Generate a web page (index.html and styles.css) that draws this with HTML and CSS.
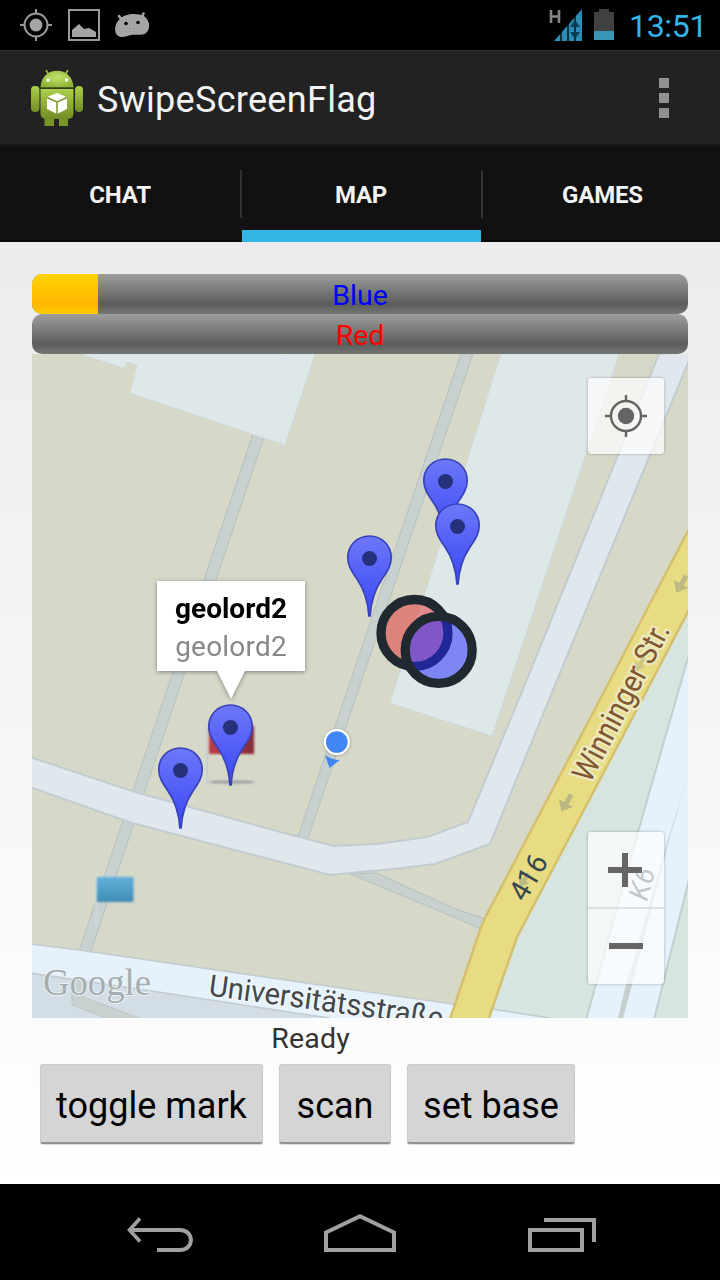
FILE: index.html
```html
<!DOCTYPE html>
<html lang="en">
<head>
<meta charset="utf-8">
<title>SwipeScreenFlag</title>
<link rel="stylesheet" href="styles.css">
</head>
<body>
<header class="status">
  <div class="status-left">
    <svg width="32" height="32" viewBox="0 0 32 32" fill="none" stroke="#999" stroke-width="2"><circle cx="16" cy="16" r="11.5"/><circle cx="16" cy="16" r="6.4" fill="#a5a5a5" stroke="none"/><path d="M16 0v5M16 27v5M0 16h5M27 16h5"/></svg>
    <svg width="32" height="32" viewBox="0 0 32 32"><path d="M1 1h30v30H1z" fill="none" stroke="#999" stroke-width="2"/><path d="M4 28v-7l7-6 5 5 5-1 7 4v5z" fill="#a5a5a5"/></svg>
    <svg class="head" width="35" height="27" viewBox="0 0 35 27"><path d="M4 5l3 4M28.500 2.500l-2 4" stroke="#a5a5a5" stroke-width="2.600" stroke-linecap="round"/><path d="M5 8C10 2 23 2 29 5c6 4 7 13 2 17-4 3-10 1-15 2-4 1-10 4-14 0C-2 19 1 11 5 8z" fill="#a5a5a5"/><circle cx="11" cy="12.500" r="1.800"/><circle cx="23" cy="11.500" r="1.800"/><path d="M15 17v1M15 20v1M19 17v1M19 20v1" stroke="#888" stroke-width="1"/></svg>
  </div>
  <div class="status-right">
    <svg width="34" height="34" viewBox="0 0 34 34"><path d="M2 1v13M10 1v13M2 7.500h8" stroke="#858585" stroke-width="2.600" fill="none"/><path d="M5 32L33 0v32z" fill="#2b8db6"/><path d="M12 18v15M19 12v21M26 6v27" stroke="#000" stroke-width="1.300"/><path d="M26 11l5 7H21zM26 30l5-7H21z" fill="#0b3e55"/></svg>
    <svg class="battery" width="20" height="31" viewBox="0 0 20 31"><path d="M0 3h5V0h10v3h5v28H0z" fill="#414141"/><path d="M0 22h20v9H0z" fill="#3996b9"/></svg>
    <span class="clock">13:51</span>
  </div>
</header>
<div class="actionbar">
  <svg width="54" height="57" viewBox="0 0 54 57">
    <defs><linearGradient id="droid" x1="0" y1="0" x2="0" y2="1"><stop offset="0" stop-color="#acd14b"/><stop offset="1" stop-color="#718c25"/></linearGradient><radialGradient id="dome" cx=".5" cy=".4" r=".6"><stop offset="0" stop-color="#c2e46d"/><stop offset="1" stop-color="#8fb434"/></radialGradient></defs>
    <path d="M16 0l3 5M38 0l-3 5" stroke="#a4c639" stroke-width="1.600"/>
    <path d="M14.500 44H24v12h-9.500zM29 44h9v12h-9z" fill="#78952a"/>
    <rect x="1" y="16" width="8.500" height="26" rx="4" fill="url(#droid)"/><rect x="45" y="16" width="8" height="26" rx="4" fill="url(#droid)"/>
    <path d="M10.500 19h33v24q0 6-6 6h-21q-6 0-6-6z" fill="url(#droid)"/>
    <path d="M10.500 17.500C11-5 43-5 43.500 17.500z" fill="url(#dome)"/>
    <path d="M10.500 18h33" stroke="#435218"/><circle cx="18" cy="10" r="1.700" fill="#fff"/><circle cx="36.500" cy="10" r="1.700" fill="#fff"/>
    <path d="M17 27l10-4 10 4v12l-10 5-10-5z" fill="#fff"/><path d="M17 27.500l10 4.500 10-4.500M27 32v12" stroke="#78952a" stroke-width="1.500" fill="none"/>
  </svg>
  <h1 class="title">SwipeScreenFlag</h1>
  <div class="overflow"><i></i><i></i><i></i></div>
</div>
<nav class="tabs">
  <div class="tab">CHAT</div>
  <div class="tab active">MAP</div>
  <div class="tab last">GAMES</div>
</nav>
<main class="content">
  <div class="bar blue"><div class="fill"></div><span>Blue</span></div>
  <div class="bar red"><span>Red</span></div>
  <div class="map">
    <svg class="canvas" width="656" height="664" viewBox="32 354 656 664">
      <defs>
        <linearGradient id="pinfill" x1="0" y1="0" x2="0" y2="1"><stop offset="0" stop-color="#6d78fa"/><stop offset=".8" stop-color="#4550f4"/><stop offset="1" stop-color="#3b47ed"/></linearGradient>
        <linearGradient id="redflag"><stop offset="0" stop-color="#bd3c45"/><stop offset="1" stop-color="#852c36"/></linearGradient>
        <linearGradient id="blueflag" x1="0" y1="0" x2="0" y2="1"><stop offset="0" stop-color="#63b0dc"/><stop offset="1" stop-color="#3f8db3"/></linearGradient>
        <filter id="soft" x="-20%" y="-20%" width="140%" height="140%"><feGaussianBlur stdDeviation=".8"/></filter>
        <filter id="pole" x="-200%" y="-10%" width="500%" height="120%"><feGaussianBlur stdDeviation=".6"/></filter>
        <filter id="shade" x="-30%" y="-150%" width="160%" height="400%"><feGaussianBlur stdDeviation="1.200"/></filter>
        <g id="pin"><path d="M0-81C12.500-81 21.700-71.500 21.700-59.500C21.700-51 17.500-45.500 12.500-38C5-27 1.500-17 .6-1h-1.200C-1.500-17-5-27-12.500-38C-17.500-45.500-21.700-51-21.700-59.500C-21.700-71.500-12.500-81 0-81z" fill="url(#pinfill)" stroke="#3843b9" stroke-width="1.700"/><circle cy="-58.500" r="7.500" fill="#25317a"/></g>
        <path id="arrow" d="M-2-10h5V0h5L0 10-8 0h6z" fill="#bdb982"/>
        <path id="uni" d="M208 995.500L360 1016L450 1030"/>
      </defs>
      <path d="M32 354h656v664H32z" fill="#d6d8c8"/>
      <g fill="#c8d1cf" stroke="#b5c0bf">
        <path d="M280 354h12L90 954H78z"/>
        <path d="M461 354h12L307 841l-10-2z"/>
        <path d="M350 874l10 4 96 40 25 11 5-10-28-9-82-37z"/>
      </g>
      <g fill="#dfe8e9" stroke="#c7d9e1" stroke-dasharray="3 2">
        <path d="M80 354l44 14 3-6 10 3-7 28 155 52 30-91z"/>
        <path d="M501 354h118L492 736l-102-33z"/>
      </g>
      <path d="M279 354h13L263 438l-9-3z" fill="#dce6e8" opacity=".8"/>
      <path d="M659 354L526.700 680 468 822l-41 15-50 7-43 2-50-13L135 792 30 757v30l102 36 198 52 30-3 33-3 42-5 55-20L553 690 690 358v-7z" fill="#e0e8ee" stroke="#c3cccf" stroke-width="2"/>
      <path d="M688 600v418H486L517 937z" fill="#d6e5df"/>
      <path d="M30 944l49 6 283 41 91 13 39 5 64 10H330l-35-5-130-20-135-20z" fill="#e5f2fb"/>
      <path d="M32 973l133 20 130 20 35 5H32z" fill="#d3dde6"/>
      <path d="M30 944l49 6 283 41 91 13 39 5 64 10M30 973l135 20 130 20 35 5" fill="none" stroke="#c3cccf" stroke-width="1.700"/>
      <path d="M72 979v26l37 14h33l-59-22v-16z" fill="#c8d1cf" stroke="#b9c6c3"/>
      <path d="M690 651L638 832 586 1020h68L690 875z" fill="#e5f2fb" stroke="#c3cfce" stroke-width="2"/>
      <path d="M688 775l-20 65-42 145-8 33h5l9-33 37-145z" fill="#c6cfd0"/>
      <path d="M690 527L605 690 485 918l-5 12-31 92h39l4-13 25-72L647 690 690 608z" fill="#e8dc82" stroke="#d5bf6d" stroke-width="2.500"/>
      <use href="#arrow" transform="translate(681 584) rotate(28)"/>
      <use href="#arrow" transform="translate(566 803) rotate(28)"/>
      <use href="#arrow" transform="translate(524 880) rotate(28) scale(.8)"/>
      <text class="street" transform="translate(590 784) rotate(-62.400)" textLength="174" lengthAdjust="spacingAndGlyphs">Winninger Str.</text>
      <use href="#arrow" transform="translate(640 664) rotate(28) scale(.8)" opacity=".6"/>
      <text class="route" transform="translate(525 903) rotate(-60)" textLength="48" lengthAdjust="spacingAndGlyphs">416</text>
      <text class="route k6" transform="translate(647 902) rotate(-75)">K6</text>
      <text class="avenue"><textPath href="#uni" textLength="236" lengthAdjust="spacingAndGlyphs">Universitätsstraße</textPath></text>
      <text class="google" x="43" y="995" textLength="108" lengthAdjust="spacingAndGlyphs">Google</text>
      <path d="M206 727h2.500v57H206z" fill="#c4d1d6" filter="url(#pole)"/>
      <ellipse cx="232" cy="782" rx="23" ry="1.600" fill="#969da0" filter="url(#shade)"/>
      <rect x="209" y="726" width="45" height="28" fill="url(#redflag)" filter="url(#soft)"/>
      <path d="M95 880h2.500v48H95z" fill="#c9d5dc" filter="url(#pole)"/>
      <rect x="97" y="877" width="36.500" height="25" fill="url(#blueflag)" filter="url(#soft)"/>
      <circle cx="414.500" cy="633" r="33.500" fill="#e62b30" fill-opacity=".5" stroke="#1f292f" stroke-width="9.300"/>
      <circle cx="438.700" cy="649.900" r="33.500" fill="#2127ff" fill-opacity=".51" stroke="#1f292f" stroke-width="9.300"/>
      <path d="M325 755l4.500 13 10.500-8q-8 0-15-5z" fill="#4285f4"/>
      <circle cx="337" cy="742.500" r="13.800" fill="#7d8584" opacity=".5" filter="url(#soft)"/>
      <circle cx="336.800" cy="742" r="12" fill="#4285f4" stroke="#fff" stroke-width="2.300"/>
      <use href="#pin" x="445.500" y="540"/><use href="#pin" x="457.500" y="585"/><use href="#pin" x="369.500" y="617"/><use href="#pin" x="230.500" y="786"/><use href="#pin" x="180.500" y="829"/>
    </svg>
    <div class="info"><strong>geolord2</strong><span>geolord2</span></div>
    <div class="control locate"><svg width="42" height="42" viewBox="0 0 42 42" fill="none" stroke="#646464" stroke-width="2.400"><circle cx="21" cy="21" r="15"/><circle cx="21" cy="21" r="8.200" fill="#646464" stroke="none"/><path d="M21 0v6M21 36v6M0 21h6M36 21h6"/></svg></div>
    <div class="control zoom">
      <svg width="76" height="152" viewBox="0 0 76 152"><path d="M0 76h76" stroke="#999" stroke-opacity=".25" stroke-width="2"/><path d="M20 38h34M37 21v34M21 114h34" stroke="#666" stroke-width="6"/></svg>
    </div>
  </div>
  <div class="ready">Ready</div>
  <div class="buttons">
    <button class="btn mark">toggle mark</button>
    <button class="btn scan">scan</button>
    <button class="btn base">set base</button>
  </div>
</main>
<footer class="nav">
  <svg width="720" height="96" viewBox="0 0 720 96" fill="none" stroke="#a0a0a0" stroke-width="4">
    <path d="M130 46h50c14.500 0 14.500 20 0 20h-23"/><path d="M140 34.500L129.500 46 140 57.500" stroke-width="3.600"/>
    <path d="M326 66V48.500L360 32.200l34 16.300V66z"/>
    <path d="M530 46h52v20h-52zM544 36h50v22"/>
  </svg>
</footer>
</body>
</html>
```

FILE: styles.css
```css
* { box-sizing: border-box; }
body { margin: 0; width: 720px; height: 1280px; display: flex; flex-direction: column; background: #000; font-family: Roboto, sans-serif; overflow: hidden; }
svg { display: block; flex: none; }
.status { height: 50px; flex: none; display: flex; justify-content: space-between; padding: 0 14px 0 20px; }
.status-left { display: flex; gap: 16px; padding-top: 9px; }
.head { margin: 2px 0 0 -1px; }
.status-right { display: flex; align-items: flex-start; padding-top: 9px; }
.battery { margin-left: 11px; }
.clock { margin-left: 15px; width: 77px; color: #33b5e5; font-size: 32px; line-height: 34px; letter-spacing: -.3px; white-space: nowrap; }
.actionbar { height: 97px; flex: none; display: flex; align-items: flex-start; padding: 19px 51px 0 30px; border-top: 1px solid #333; background: linear-gradient(#222 92px, #1a1a1a 93px, #171717 95px, #0d0d0d 96px); }
.title { margin: 7px 0 0 13px; font-size: 36px; line-height: 46px; font-weight: 400; letter-spacing: .3px; color: #f3f3f3; white-space: nowrap; }
.overflow { display: grid; gap: 5px; margin: 8px 0 0 auto; }
.overflow i { width: 10px; height: 10px; background: #909090; }
.tabs { height: 95px; flex: none; display: grid; grid-template-columns: 240px 242px 238px; background: #111; border-bottom: 2px solid #080808; }
.tab { height: 95px; font-size: 24px; font-weight: 700; line-height: 97px; letter-spacing: -.2px; text-align: center; color: #f3f3f3; }
.last { padding-left: 3px; background: linear-gradient(#333, #333) 0 23px / 1px 48px no-repeat; }
.active { background: linear-gradient(#333, #333) 0 23px / 2px 48px no-repeat, linear-gradient(#333, #333) 241px 23px / 1px 48px no-repeat, linear-gradient(#33b5e5, #33b5e5) 2px 83px / 239px 12px no-repeat; }
.content { height: 942px; flex: none; padding: 32px 32px 0; background: linear-gradient(#ececec, #fff); }
.bar { height: 40px; display: flex; justify-content: center; position: relative; border-radius: 10px; overflow: hidden; background: linear-gradient(#9d9e9d, #5a5d5a 75%, #747674); font-size: 28.5px; line-height: 44px; }
.bar span { position: relative; }
.fill { position: absolute; left: 0; top: 0; width: 66px; height: 40px; background: linear-gradient(#ffd300, #ffb600 75%, #ffcb00); }
.blue { color: #00f; }
.red { color: #f00; }
.map { position: relative; height: 664px; overflow: hidden; }
.street { font-size: 31px; fill: #805731; stroke: #ece8bd; stroke-width: 5px; paint-order: stroke; }
.route { font-size: 29px; fill: #374850; }
.k6 { font-size: 28px; font-style: italic; }
.avenue { font-size: 30px; fill: #42484b; stroke: #f1f6f8; stroke-width: 3px; paint-order: stroke; }
.google { font-family: "Liberation Serif", serif; font-size: 38px; fill: #a4adb1; stroke: #edf3f5; stroke-width: 2px; paint-order: stroke; }
.info { position: absolute; left: 125px; top: 227px; width: 148px; height: 90px; padding-top: 9px; background: #fff; display: flex; flex-direction: column; align-items: center; font-size: 28px; line-height: 38px; color: #888; filter: drop-shadow(0 1px 2px rgba(0,0,0,.4)); }
.info::after { content: ""; position: absolute; left: 60px; top: 90px; border: solid transparent; border-width: 28px 14px 0; border-top-color: #fff; }
.info strong { color: #000; }
.info span { letter-spacing: .2px; }
.control { position: absolute; left: 556px; width: 76px; border-radius: 3px; background: rgba(255,255,255,.7); box-shadow: 0 0 3px rgba(0,0,0,.3); }
.locate { top: 24px; height: 76px; padding: 17px; }
.zoom { top: 478px; height: 152px; }
.ready { width: 557px; height: 42px; text-align: center; font-size: 28.5px; line-height: 42px; color: #333; letter-spacing: .2px; }
.buttons { display: flex; gap: 16px; padding: 4px 8px; }
.btn { height: 80px; padding: 5px 0 0; border: 1px solid #ccc; border-bottom: 2px solid #929292; border-radius: 3px; background: #d5d5d5; box-shadow: 0 1px 1px #ddd; font-family: Roboto, sans-serif; font-size: 36px; color: #000; white-space: nowrap; }
.mark { width: 223px; }
.scan { width: 112px; }
.base { width: 168px; }
.nav { height: 96px; flex: none; background: #000; }
```
